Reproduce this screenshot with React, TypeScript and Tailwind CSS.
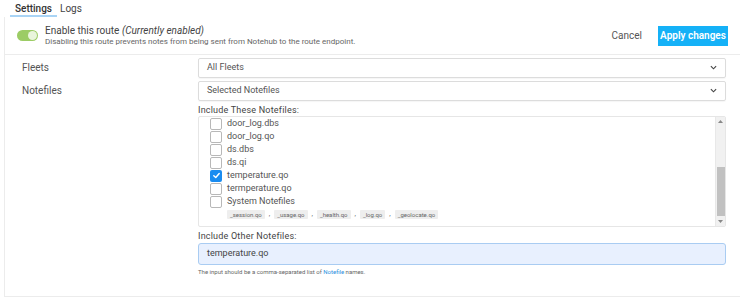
import React from "react";

const files = [
  { name: "door_log.dbs", checked: false },
  { name: "door_log.qo", checked: false },
  { name: "ds.dbs", checked: false },
  { name: "ds.qi", checked: false },
  { name: "temperature.qo", checked: true },
  { name: "termperature.qo", checked: false },
];

const sys = ["_session.qo", "_usage.qo", "_health.qo", "_log.qo", "_geolocate.qo"];

function Box({ checked }: { checked: boolean }) {
  if (checked)
    return (
      <span className="w-[12px] h-[12px] rounded-[2px] bg-[#1a8cf0] flex items-center justify-center shrink-0">
        <svg width="9" height="9" viewBox="0 0 10 10">
          <path d="M2 5.2 L4.2 7.3 L8 2.8" stroke="white" strokeWidth="1.6" fill="none" strokeLinecap="round" strokeLinejoin="round" />
        </svg>
      </span>
    );
  return <span className="w-[12px] h-[12px] rounded-[2px] border border-[#b8b8b8] bg-white shrink-0" />;
}

function Chevron() {
  return (
    <svg width="7" height="5" viewBox="0 0 8 5">
      <path d="M1 1 L4 4 L7 1" stroke="#444" strokeWidth="1.3" fill="none" />
    </svg>
  );
}

export default function App() {
  return (
    <div className="w-[740px] h-[297px] bg-white overflow-hidden text-[#4a4a4a]" style={{ fontFamily: "Roboto, 'Liberation Sans', sans-serif" }}>
      {/* tabs */}
      <div className="flex h-[17px] pl-[10px] items-start">
        <div className="px-[5px] pt-[1px] h-[17px] border-b-[2px] border-[#a9d4f5] text-[10px] text-[#333] font-medium">Settings</div>
        <div className="px-[3px] pt-[1px] text-[10px] text-[#444]">Logs</div>
      </div>
      <div className="ml-[4px] border-l border-[#ececec] h-[280px] flex flex-col">
        {/* header */}
        <div className="flex items-center h-[38px] border-b border-[#ececec] pl-[12px] pr-[12px]">
          <span className="w-[21px] h-[11px] rounded-full bg-[#9ccc65] relative shrink-0">
            <span className="absolute right-[1px] top-[1px] w-[9px] h-[9px] rounded-full bg-[#e9f5dc]" />
          </span>
          <div className="ml-[7px] flex flex-col leading-none">
            <span className="text-[10px] text-[#444]">
              Enable this route <i>(Currently enabled)</i>
            </span>
            <span className="text-[8px] text-[#666] mt-[2px]">
              Disabling this route prevents notes from being sent from Notehub to the route endpoint.
            </span>
          </div>
          <div className="flex-1" />
          <span className="text-[10px] text-[#555] mr-[16px]">Cancel</span>
          <span className="h-[20px] w-[70px] bg-[#15b1f7] text-white text-[10px] font-semibold flex items-center justify-center">
            Apply changes
          </span>
        </div>
        {/* form */}
        <div className="flex flex-col pt-[2px]">
          <div className="flex items-center h-[21px] mb-[2px]">
            <div className="w-[193px] pl-[17px] text-[10px] text-[#555]">Fleets</div>
            <div className="flex-1 mr-[14px] h-[20px] border border-[#dcdcdc] rounded-[2px] shadow-[0_1px_1px_rgba(0,0,0,0.04)] flex items-center justify-between px-[8px] text-[9px] text-[#555]">
              <span>All Fleets</span>
              <Chevron />
            </div>
          </div>
          <div className="flex items-center h-[21px]">
            <div className="w-[193px] pl-[17px] text-[10px] text-[#555]">Notefiles</div>
            <div className="flex-1 mr-[14px] h-[20px] border border-[#dcdcdc] rounded-[2px] shadow-[0_1px_1px_rgba(0,0,0,0.04)] flex items-center justify-between px-[8px] text-[9px] text-[#555]">
              <span>Selected Notefiles</span>
              <Chevron />
            </div>
          </div>
          <div className="ml-[193px] mr-[14px] flex flex-col">
            <div className="text-[9px] text-[#444] mt-[4px] leading-[11px] tracking-[0.2px]">Include These Notefiles:</div>
            <div className="h-[111px] border border-[#e6e6e6] rounded-[2px] flex overflow-hidden">
              <div className="flex-1 flex flex-col pl-[11px] pt-[0px]">
                {files.map((f) => (
                  <div key={f.name} className="flex items-center h-[13px] gap-[5px] mt-[0px]">
                    <Box checked={f.checked} />
                    <span className="text-[9px] text-[#555]">{f.name}</span>
                  </div>
                ))}
                <div className="flex items-center h-[13px] gap-[5px]">
                  <Box checked={false} />
                  <span className="text-[9px] text-[#555]">System Notefiles</span>
                </div>
                <div className="flex items-center pl-[17px] mt-[1px] text-[6px] text-[#666]">
                  {sys.map((s, i) => (
                    <React.Fragment key={s}>
                      {i > 0 && <span className="mx-[4px] text-[7px]">,</span>}
                      <span className="bg-[#eeeeee] px-[3px] h-[9px] flex items-center rounded-[1px]">{s}</span>
                    </React.Fragment>
                  ))}
                </div>
              </div>
              <div className="w-[10px] bg-[#f1f1f1] border-l border-[#e8e8e8] flex flex-col items-center">
                <div className="h-[10px] flex items-center justify-center">
                  <svg width="5" height="3" viewBox="0 0 5 3"><path d="M0 3 L2.5 0 L5 3Z" fill="#888" /></svg>
                </div>
                <div className="h-[40px]" />
                <div className="w-[8px] h-[50px] bg-[#c1c1c1]" />
                <div className="flex-1" />
                <div className="h-[10px] flex items-center justify-center">
                  <svg width="5" height="3" viewBox="0 0 5 3"><path d="M0 0 L2.5 3 L5 0Z" fill="#888" /></svg>
                </div>
              </div>
            </div>
            <div className="text-[9px] text-[#444] mt-[4px] leading-[11px] tracking-[0.2px]">Include Other Notefiles:</div>
            <div className="h-[22px] bg-[#e8f0fe] border border-[#a9ccf2] rounded-[3px] flex items-center px-[8px] text-[9px] text-[#444] mt-[1px]">
              temperature.qo
            </div>
            <div className="text-[6px] text-[#666] mt-[2px]">
              The input should be a comma-separated list of <span className="text-[#2a8fe0]">Notefile</span> names.
            </div>
          </div>
          <div className="flex-1" />
        </div>
        <div className="flex-1" />
        <div className="border-b border-[#ececec] h-[4px]" />
      </div>
    </div>
  );
}
